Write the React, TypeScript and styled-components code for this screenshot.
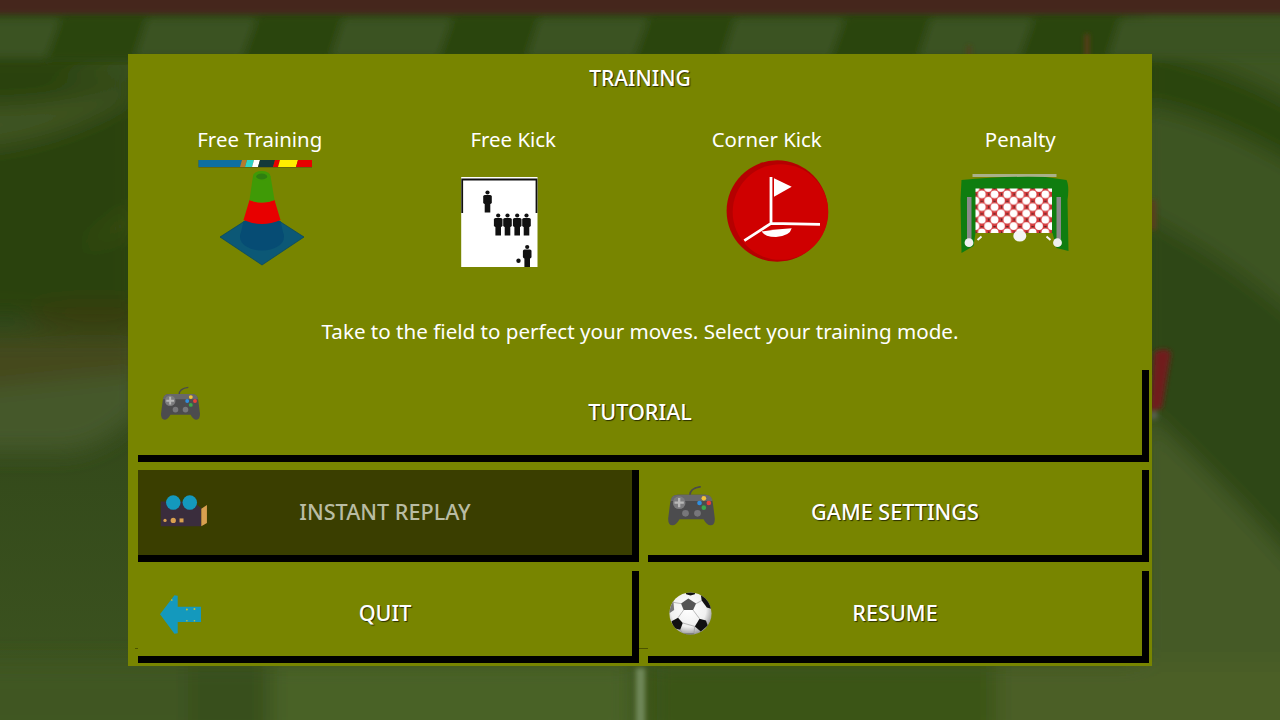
import React from 'react';
import styled, { createGlobalStyle } from 'styled-components';

const GlobalStyle = createGlobalStyle`
   html, body {
      margin: 0;
      padding: 0;
      background: #34491a;
   }
   * {
      box-sizing: border-box;
   }
`;

type ModeArtProps = { x: number; children: React.ReactNode };

// the art is drawn in page coordinates, each tile just looks at its own piece
const ModeArt = ({ x, children }: ModeArtProps) => (
   <ArtSvg viewBox={`${x} 156 253.5 112`}>{children}</ArtSvg>
);

const Person = ({ x, y, h }: { x: number; y: number; h: number }) => {
   const u = h / 22;
   return (
      <g fill="#111">
         <circle cx={x} cy={y + 2 * u} r={2.1 * u} />
         <rect x={x - 4.3 * u} y={y + 4.4 * u} width={8.6 * u} height={9 * u} rx={1.6 * u} />
         <rect x={x - 2.8 * u} y={y + 11 * u} width={5.6 * u} height={11 * u} />
      </g>
   );
};

const ConeArt = () => (
   <>
      <rect x="198.5" y="160" width="113.5" height="7.6" fill="#5a5a10" />
      <rect x="198.5" y="160" width="43.5" height="7" fill="#0d6f9f" />
      <polygon points="242,160 247,160 245,167 240,167" fill="#b57a2c" />
      <polygon points="247,160 254,160 252,167 245,167" fill="#2fd3c6" />
      <polygon points="254,160 260,160 258,167 252,167" fill="#ffffff" />
      <polygon points="260,160 275,160 273,167 258,167" fill="#123a3a" />
      <polygon points="275,160 280,160 278,167 273,167" fill="#e80000" />
      <polygon points="280,160 298,160 296,167 278,167" fill="#ffee00" />
      <polygon points="298,160 312,160 312,167 296,167" fill="#e80000" />
      <polygon points="220,237 262,210 304,237 262,265" fill="#0c5876" stroke="#0a4a60" strokeWidth="0.8" />
      <ellipse cx="262" cy="237" rx="22" ry="13.5" fill="#064c74" />
      <path d="M243.5 221 L240 237 L284 237 L280.5 221 Z" fill="#064c74" />
      <path d="M249.5 200 L243.5 220 Q262 228 280.5 220 L274.5 200 Q262 205 249.5 200 Z" fill="#e80000" />
      <path d="M253 176 L249.5 200 Q262 205 274.5 200 L270.5 176 Z" fill="#3f9a06" />
      <ellipse cx="261.7" cy="176" rx="8.7" ry="5" fill="#3f9a06" />
      <ellipse cx="261.7" cy="176.5" rx="5.5" ry="3" fill="#2f7f10" />
   </>
);

const FreeKickArt = () => (
   <>
      <rect x="460.7" y="177" width="76.3" height="90" fill="#ffffff" />
      <path d="M461.7 213 V179.5 H536 V213" fill="none" stroke="#111" strokeWidth="1.8" />
      <Person x={487} y={190.5} h={22} />
      <Person x={497.7} y={213.5} h={22} />
      <Person x={507} y={213.5} h={22} />
      <Person x={516.7} y={213.5} h={22} />
      <Person x={526} y={213.5} h={22} />
      <Person x={526.7} y={245} h={22} />
      <circle cx="518" cy="260.7" r="2.2" fill="#111" />
   </>
);

const CornerArt = () => (
   <>
      <circle cx="777.3" cy="211" r="50.7" fill="#b50000" />
      <circle cx="780.5" cy="212" r="47.8" fill="#cf0000" />
      <path d="M761.7 231.5 Q776 229 791.7 228.3 Q790 236 776 237 Q765 237 761.7 231.5 Z" fill="#ffffff" />
      <path d="M771 177 V223.3 L820 224.3 M771 223.3 L744.3 240.7" fill="none" stroke="#ffffff" strokeWidth="2.8" />
      <polygon points="774,178.3 791.7,186.7 774,196.7" fill="#ffffff" />
   </>
);

const PenaltyArt = () => (
   <>
      <defs>
         <pattern id="net" x="975" y="188" width="12.7" height="12.7" patternUnits="userSpaceOnUse">
            <rect width="12.7" height="12.7" fill="#d4383a" />
            <circle cx="0" cy="0" r="3.9" fill="#fff" />
            <circle cx="12.7" cy="0" r="3.9" fill="#fff" />
            <circle cx="0" cy="12.7" r="3.9" fill="#fff" />
            <circle cx="12.7" cy="12.7" r="3.9" fill="#fff" />
            <circle cx="6.35" cy="6.35" r="3.9" fill="#fff" />
            <circle cx="6.35" cy="0" r="1.3" fill="#4a2a2a" />
            <circle cx="0" cy="6.35" r="1.3" fill="#4a2a2a" />
         </pattern>
      </defs>
      <rect x="972" y="174" width="84" height="3" fill="#a9b08a" />
      <path
         d="M961 180 Q1000 176 1045 177 L1066 180 Q1069 186 1067 200 L1068 251 L1056 248 L1052 233 L975 233 L973 246 L961 253 L960 200 Z"
         fill="#0f7d0f"
      />
      <rect x="975" y="188.5" width="76.5" height="44.5" fill="url(#net)" />
      <rect x="966.5" y="197" width="4.5" height="42" fill="#8a8a8a" />
      <rect x="1056" y="197" width="4.5" height="42" fill="#8a8a8a" />
      <circle cx="968.5" cy="242.7" r="4.4" fill="#f0f0f0" />
      <circle cx="1057" cy="242.7" r="4.4" fill="#f0f0f0" />
      <ellipse cx="1019.3" cy="236" rx="6.5" ry="5.5" fill="#f4f4f4" />
      <path d="M977 240 L981 236.5 M1046 236.5 L1050 240" stroke="#f4f4f4" strokeWidth="2" />
   </>
);

const Gamepad = ({ width, height }: { width: number; height: number }) => (
   <svg width={width} height={height} viewBox="0 0 140 120">
      <path d="M65 28 Q65 6 98 2" fill="none" stroke="#4a4a4a" strokeWidth="5" />
      <path
         d="M28 26 H112 Q130 26 134 50 L140 98 Q140 118 127 118 Q116 118 106 100 H34 Q24 118 13 118 Q0 118 0 98 L6 50 Q10 26 28 26 Z"
         fill="#4c4c4e"
      />
      <path d="M28 26 H112 Q130 26 133 45 H7 Q10 26 28 26 Z" fill="#68686a" />
      <circle cx="33" cy="50" r="19" fill="#7c7c7e" />
      <path d="M33 36 V64 M19 50 H47" stroke="#b8b8b8" strokeWidth="7" />
      <circle cx="52" cy="82" r="10" fill="#77777a" />
      <circle cx="88" cy="82" r="10" fill="#77777a" />
      <circle cx="107" cy="37" r="7" fill="#f2c33a" />
      <circle cx="94" cy="51" r="7" fill="#2f8fe0" />
      <circle cx="122" cy="51" r="7" fill="#e8403a" />
      <circle cx="107" cy="65" r="7" fill="#3aa84a" />
   </svg>
);

const Camera = () => (
   <svg width="47" height="32" viewBox="0 0 142 97">
      <path d="M2 20 H100 L125 40 V95 H2 Z" fill="#3a2d3d" />
      <circle cx="40" cy="23" r="22" fill="#1499bd" />
      <circle cx="90" cy="23" r="22" fill="#1499bd" />
      <polygon points="125,42 142,30 142,85 125,95" fill="#d9a050" />
      <circle cx="15" cy="77" r="5" fill="#d9a050" />
      <circle cx="40" cy="77" r="8" fill="#d9a050" />
      <rect x="59" y="71" width="12" height="12" fill="#d9a050" />
   </svg>
);

const BackArrow = () => (
   <svg width="41" height="39" viewBox="0 0 125 118">
      <polygon points="0,58 44,0 54,2 54,35 125,35 125,82 54,82 54,116 44,118" fill="#1499bd" />
      <circle cx="82" cy="44" r="3" fill="#c2c23a" />
      <circle cx="105" cy="42" r="3" fill="#c2c23a" />
      <circle cx="82" cy="78" r="2.5" fill="#c2c23a" />
      <circle cx="105" cy="78" r="2.5" fill="#c2c23a" />
      <circle cx="36" cy="15" r="2.5" fill="#c2c23a" />
   </svg>
);

const Ball = () => (
   <svg width="43" height="43" viewBox="0 0 100 100">
      <defs>
         <radialGradient id="ballShade" cx="45%" cy="40%" r="60%">
            <stop offset="0%" stopColor="#ffffff" />
            <stop offset="70%" stopColor="#f0f0f0" />
            <stop offset="100%" stopColor="#9c9c9c" />
         </radialGradient>
         <clipPath id="ballClip">
            <circle cx="50" cy="50" r="49" />
         </clipPath>
      </defs>
      <circle cx="50" cy="50" r="49" fill="url(#ballShade)" />
      <g clipPath="url(#ballClip)">
         <polygon points="45,15 63,27 56,42 34,42 28,27" fill="#555" />
         <polygon points="38,-2 62,-2 60,5 50,8 40,5" fill="#111" />
         <polygon points="74,6 102,12 102,40 88,36 76,20" fill="#111" />
         <polygon points="0,22 10,20 12,42 0,50" fill="#777" />
         <polygon points="21,60 32,72 26,88 10,84 6,68" fill="#111" />
         <polygon points="71,62 86,66 90,78 74,92 60,80" fill="#111" />
         <polygon points="32,96 58,96 62,102 30,102" fill="#777" />
         <path d="M28 27 L10 24 M63 27 L76 20 M34 42 L21 60 M56 42 L71 62 M32 72 L60 80 M26 88 L32 96 M60 80 L58 96" stroke="#999" strokeWidth="1.5" />
      </g>
   </svg>
);

const FieldBackdrop = () => (
   <Field viewBox="0 0 1280 720" preserveAspectRatio="none">
      <defs>
         <filter id="blurWide" x="-5%" y="-5%" width="110%" height="110%">
            <feGaussianBlur stdDeviation="11" />
         </filter>
         <filter id="blurMid" x="-5%" y="-5%" width="110%" height="110%">
            <feGaussianBlur stdDeviation="5" />
         </filter>
         <filter id="blurSoft" x="-5%" y="-5%" width="110%" height="110%">
            <feGaussianBlur stdDeviation="2.5" />
         </filter>
         <linearGradient id="grass" x1="0" y1="0" x2="0" y2="1">
            <stop offset="0%" stopColor="#2f4614" />
            <stop offset="60%" stopColor="#33491a" />
            <stop offset="100%" stopColor="#3d5420" />
         </linearGradient>
      </defs>
      <rect width="1280" height="720" fill="url(#grass)" />
      <g filter="url(#blurWide)">
         {/* left side */}
         <rect x="-30" y="48" width="170" height="270" fill="#2b4311" />
         <polygon points="140,50 140,74 50,78" fill="#3c5420" />
         <path d="M-30 106 Q60 108 140 82 L140 92 Q60 142 -30 148 Z" fill="#3f5522" />
         <polygon points="140,204 140,226 74,252" fill="#394f18" />
         <rect x="-30" y="338" width="170" height="52" fill="#44491a" />
         <ellipse cx="95" cy="316" rx="70" ry="14" fill="#393c08" />
         <path d="M-30 390 L140 372 V412 Q100 452 60 452 H-30 Z" fill="#44592a" />
         {/* right side */}
         <rect x="1140" y="14" width="170" height="520" fill="#3d5521" />
         <path d="M1140 48 Q1220 60 1310 112 V175 Q1220 118 1140 104 Z" fill="#2c4511" />
         <path d="M1140 214 Q1220 250 1310 330 V580 Q1210 470 1140 408 Z" fill="#2f4613" />
         <path d="M1140 408 Q1210 470 1310 580 V740 H1140 Z" fill="#445a26" />
         {/* bottom strip */}
         <rect x="-30" y="662" width="218" height="80" fill="#3f5620" />
         <rect x="188" y="662" width="82" height="80" fill="#37501a" />
         <rect x="270" y="662" width="363" height="80" fill="#486226" />
         <rect x="650" y="662" width="346" height="80" fill="#3b5419" />
         <rect x="996" y="662" width="300" height="80" fill="#4b5e27" />
      </g>
      <g filter="url(#blurMid)">
         {/* mowing stripes along the top */}
         <rect x="-20" y="18" width="1320" height="40" fill="#3a5320" />
         {[57, 253, 449, 645, 841, 1030].map((x) => (
            <polygon key={x} points={`${x + 6},12 ${x + 92},12 ${x + 76},62 ${x - 12},62`} fill="#2b4410" />
         ))}
      </g>
      <g filter="url(#blurSoft)">
         <rect x="-10" y="-10" width="1300" height="24" fill="#45251f" />
         <rect x="636" y="668" width="9" height="60" fill="#71895a" />
         <path d="M1154 352 Q1166 346 1171 353 L1162 408 L1150 412 Z" fill="#701c1c" />
         <rect x="1150" y="412" width="7" height="7" fill="#5f6456" />
         <rect x="1150" y="200" width="6" height="30" fill="#5d3c1c" />
         <rect x="1085" y="34" width="4" height="24" fill="#66391c" />
         <rect x="967" y="46" width="4" height="10" fill="#553c1c" />
      </g>
   </Field>
);

type MenuButtonProps = {
   label: string;
   icon: React.ReactNode;
   iconX: number;
   iconY: number;
   $wide?: boolean;
   $muted?: boolean;
   $tick?: number;
};

const MenuButton = ({ label, icon, iconX, iconY, $wide, $muted, $tick }: MenuButtonProps) => (
   <StyledButton $wide={$wide} $muted={$muted} $tick={$tick}>
      <IconSlot $x={iconX} $y={iconY}>
         {icon}
      </IconSlot>
      <ButtonLabel $muted={$muted}>{label}</ButtonLabel>
   </StyledButton>
);

const modes = [
   { label: 'Free Training', x: 133, art: <ConeArt /> },
   { label: 'Free Kick', x: 386.5, art: <FreeKickArt /> },
   { label: 'Corner Kick', x: 640, art: <CornerArt /> },
   { label: 'Penalty', x: 893.5, art: <PenaltyArt /> },
];

export default function App() {
   return (
      <Page>
         <GlobalStyle />
         <FieldBackdrop />
         <Panel>
            <Title>TRAINING</Title>
            <Modes>
               {modes.map((mode) => (
                  <Mode key={mode.label}>
                     <ModeLabel>{mode.label}</ModeLabel>
                     <ModeArt x={mode.x}>{mode.art}</ModeArt>
                  </Mode>
               ))}
            </Modes>
            <Description>Take to the field to perfect your moves. Select your training mode.</Description>
            <Buttons>
               <MenuButton label="TUTORIAL" icon={<Gamepad width={39} height={35} />} iconX={23} iconY={16} $wide />
               <MenuButton label="INSTANT REPLAY" icon={<Camera />} iconX={22} iconY={25} $muted />
               <MenuButton label="GAME SETTINGS" icon={<Gamepad width={47} height={40} />} iconX={20} iconY={16} />
               <MenuButton label="QUIT" icon={<BackArrow />} iconX={22} iconY={24} $tick={3} />
               <MenuButton label="RESUME" icon={<Ball />} iconX={21} iconY={21} $tick={9} />
            </Buttons>
         </Panel>
      </Page>
   );
}

const Page = styled.div`
   position: relative;
   width: 1280px;
   height: 720px;
   padding-top: 54px;
   overflow: hidden;
   font-family: 'Noto Sans', 'Open Sans', sans-serif;
   color: #ffffff;
`;
const Field = styled.svg`
   position: absolute;
   inset: 0;
   width: 1280px;
   height: 720px;
`;
const Panel = styled.main`
   position: relative;
   width: 1024px;
   height: 612px;
   margin: 0 auto;
   background: #788500;
`;
const Title = styled.h1`
   margin: 0;
   height: 48px;
   font-size: 21px;
   font-weight: 500;
   line-height: 48px;
   text-align: center;
   text-shadow: 1px 1px 1px rgba(0, 0, 0, 0.65);
`;
const Modes = styled.div`
   display: grid;
   grid-template-columns: repeat(4, 1fr);
   padding: 22px 5px 0;
`;
const Mode = styled.div`
   display: flex;
   flex-direction: column;
   align-items: center;
`;
const ModeLabel = styled.div`
   height: 32px;
   font-size: 20.4px;
   line-height: 30px;
`;
const ArtSvg = styled.svg`
   display: block;
   width: 253.5px;
   height: 112px;
   filter: blur(0.4px);
`;
const Description = styled.p`
   margin: 48px 0 24px;
   height: 30px;
   font-size: 20.6px;
   line-height: 30px;
   text-align: center;
`;
const Buttons = styled.div`
   display: grid;
   grid-template-columns: 1fr 1fr;
   grid-template-rows: 92px 92px 93px;
   column-gap: 9px;
   row-gap: 8px;
   padding: 0 3px 0 10px;
`;
const StyledButton = styled.div<{ $wide?: boolean; $muted?: boolean; $tick?: number }>`
   position: relative;
   display: grid;
   grid-template-columns: 1fr auto 1fr;
   grid-column: ${(props) => (props.$wide ? '1 / span 2' : 'auto')};
   margin-top: ${(props) => (props.$tick ? '1px' : '0')};
   border-right: 7px solid #000000;
   border-bottom: 7px solid #000000;
   background: ${(props) => (props.$muted ? '#3a3e00' : 'transparent')};

   &::before {
      content: '';
      display: ${(props) => (props.$tick ? 'block' : 'none')};
      position: absolute;
      left: ${(props) => -(props.$tick ?? 0)}px;
      top: 77px;
      width: ${(props) => props.$tick ?? 0}px;
      height: 1px;
      background: #4c5400;
   }
`;
const IconSlot = styled.div<{ $x: number; $y: number }>`
   padding: ${(props) => props.$y}px 0 0 ${(props) => props.$x}px;
   line-height: 0;
`;
const ButtonLabel = styled.div<{ $muted?: boolean }>`
   align-self: center;
   padding-bottom: 2px;
   font-size: 21.6px;
   font-weight: 500;
   color: ${(props) => (props.$muted ? '#b9bca3' : '#ffffff')};
   text-shadow: ${(props) => (props.$muted ? 'none' : '1px 1px 1px rgba(0, 0, 0, 0.65)')};
`;
